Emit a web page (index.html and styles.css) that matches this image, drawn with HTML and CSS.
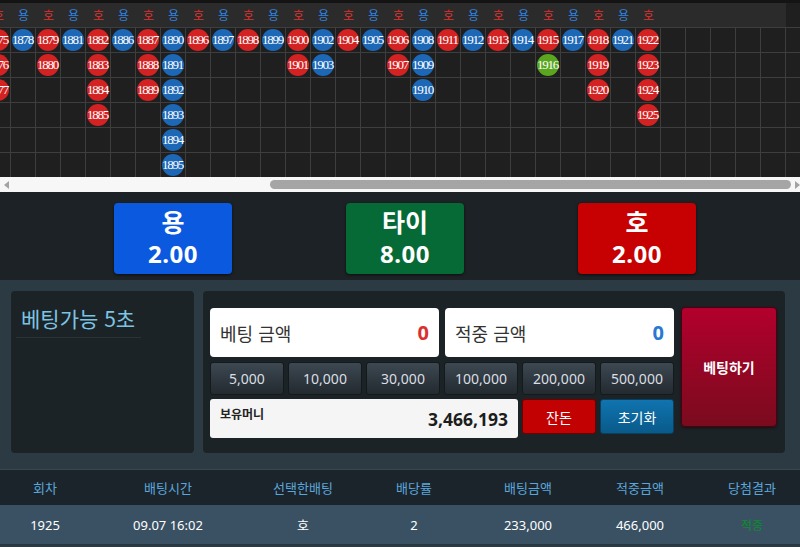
FILE: index.html
```html
<!DOCTYPE html>
<html lang="ko">
<head>
<meta charset="utf-8">
<title>Dragon Tiger</title>
<link rel="stylesheet" href="styles.css">
</head>
<body>
<div class="road">
  <div class="track">
    <div class="col"><span class="h r">호</span><div class="b"><span class="d r">1875</span><span class="d r">1876</span><span class="d r">1877</span></div></div>
    <div class="col"><span class="h u">용</span><div class="b"><span class="d u">1878</span></div></div>
    <div class="col"><span class="h r">호</span><div class="b"><span class="d r">1879</span><span class="d r">1880</span></div></div>
    <div class="col"><span class="h u">용</span><div class="b"><span class="d u">1881</span></div></div>
    <div class="col"><span class="h r">호</span><div class="b"><span class="d r">1882</span><span class="d r">1883</span><span class="d r">1884</span><span class="d r">1885</span></div></div>
    <div class="col"><span class="h u">용</span><div class="b"><span class="d u">1886</span></div></div>
    <div class="col"><span class="h r">호</span><div class="b"><span class="d r">1887</span><span class="d r">1888</span><span class="d r">1889</span></div></div>
    <div class="col"><span class="h u">용</span><div class="b"><span class="d u">1890</span><span class="d u">1891</span><span class="d u">1892</span><span class="d u">1893</span><span class="d u">1894</span><span class="d u">1895</span></div></div>
    <div class="col"><span class="h r">호</span><div class="b"><span class="d r">1896</span></div></div>
    <div class="col"><span class="h u">용</span><div class="b"><span class="d u">1897</span></div></div>
    <div class="col"><span class="h r">호</span><div class="b"><span class="d r">1898</span></div></div>
    <div class="col"><span class="h u">용</span><div class="b"><span class="d u">1899</span></div></div>
    <div class="col"><span class="h r">호</span><div class="b"><span class="d r">1900</span><span class="d r">1901</span></div></div>
    <div class="col"><span class="h u">용</span><div class="b"><span class="d u">1902</span><span class="d u">1903</span></div></div>
    <div class="col"><span class="h r">호</span><div class="b"><span class="d r">1904</span></div></div>
    <div class="col"><span class="h u">용</span><div class="b"><span class="d u">1905</span></div></div>
    <div class="col"><span class="h r">호</span><div class="b"><span class="d r">1906</span><span class="d r">1907</span></div></div>
    <div class="col"><span class="h u">용</span><div class="b"><span class="d u">1908</span><span class="d u">1909</span><span class="d u">1910</span></div></div>
    <div class="col"><span class="h r">호</span><div class="b"><span class="d r">1911</span></div></div>
    <div class="col"><span class="h u">용</span><div class="b"><span class="d u">1912</span></div></div>
    <div class="col"><span class="h r">호</span><div class="b"><span class="d r">1913</span></div></div>
    <div class="col"><span class="h u">용</span><div class="b"><span class="d u">1914</span></div></div>
    <div class="col"><span class="h r">호</span><div class="b"><span class="d r">1915</span><span class="d g">1916</span></div></div>
    <div class="col"><span class="h u">용</span><div class="b"><span class="d u">1917</span></div></div>
    <div class="col"><span class="h r">호</span><div class="b"><span class="d r">1918</span><span class="d r">1919</span><span class="d r">1920</span></div></div>
    <div class="col"><span class="h u">용</span><div class="b"><span class="d u">1921</span></div></div>
    <div class="col"><span class="h r">호</span><div class="b"><span class="d r">1922</span><span class="d r">1923</span><span class="d r">1924</span><span class="d r">1925</span></div></div>
    <div class="col"><span class="h"></span><div class="b"></div></div>
    <div class="col"><span class="h"></span><div class="b"></div></div>
    <div class="col"><span class="h"></span><div class="b"></div></div>
    <div class="col"><span class="h"></span><div class="b"></div></div>
    <div class="col"><span class="h"></span><div class="b"></div></div>
    <div class="col"><span class="h end"></span><div class="b"></div></div>
  </div>
</div>
<div class="scroll">
  <span class="arr-l"></span>
  <span class="thumb"></span>
  <span class="arr-r"></span>
</div>

<div class="picks">
  <div class="pick dragon"><span class="n">용</span><span class="o">2.00</span></div>
  <div class="pick tie"><span class="n">타이</span><span class="o">8.00</span></div>
  <div class="pick tiger"><span class="n">호</span><span class="o">2.00</span></div>
</div>

<div class="lower">
  <div class="status">
    <div class="status-title">베팅가능 5초</div>
  </div>
  <div class="board">
    <div class="form">
      <div class="amounts">
        <div class="amt"><span class="amt-label">베팅 금액</span><span class="amt-val red">0</span></div>
        <div class="amt"><span class="amt-label">적중 금액</span><span class="amt-val blue">0</span></div>
      </div>
      <div class="chips">
        <button class="chip">5,000</button>
        <button class="chip">10,000</button>
        <button class="chip">30,000</button>
        <button class="chip">100,000</button>
        <button class="chip">200,000</button>
        <button class="chip">500,000</button>
      </div>
      <div class="money-row">
        <div class="money"><span class="money-label">보유머니</span><span class="money-val">3,466,193</span></div>
        <button class="act change">잔돈</button>
        <button class="act reset">초기화</button>
      </div>
    </div>
    <button class="bet">베팅하기</button>
  </div>
</div>

<div class="tbl">
  <div class="trow thead">
    <span>회차</span><span>배팅시간</span><span>선택한배팅</span><span>배당률</span><span>배팅금액</span><span>적중금액</span><span class="last">당첨결과</span>
  </div>
  <div class="trow tdata">
    <span>1925</span><span>09.07 16:02</span><span>호</span><span>2</span><span>233,000</span><span>466,000</span><span class="last win">적중</span>
  </div>
</div>
</body>
</html>
```

FILE: styles.css
```css
html, body {
  margin: 0;
  padding: 0;
}
body {
  width: 800px;
  height: 547px;
  overflow: hidden;
  background: #2c3a44;
  font-family: "Noto Sans", "Noto Sans CJK KR", sans-serif;
}

/* road grid */
.road {
  box-sizing: border-box;
  height: 177px;
  background: #1f1f1f;
  border-top: 3px solid #141414;
  overflow: hidden;
}
.track {
  display: flex;
  margin-left: -14px;
  height: 174px;
}
.col {
  flex: none;
  width: 25px;
  display: flex;
  flex-direction: column;
}
.h {
  display: block;
  height: 24px;
  line-height: 24px;
  background: #2b2b2b;
  text-align: center;
  font-family: "Noto Sans CJK KR", sans-serif;
  font-size: 12px;
}
.h.end {
  background: #1f1f1f;
}
.h.r { color: #e2322e; }
.h.u { color: #2f84e4; }
.b {
  flex: 1;
  box-sizing: border-box;
  border-right: 1px solid #3e3e3e;
  background: repeating-linear-gradient(to bottom, #3e3e3e 0 1px, transparent 1px 25px);
  display: flex;
  flex-direction: column;
  align-items: center;
}
.d {
  display: block;
  flex: none;
  width: 22px;
  height: 22px;
  margin: 2px 0 1px;
  border-radius: 50%;
  color: #fff;
  font-family: "Liberation Serif", "DejaVu Serif", serif;
  font-size: 13px;
  letter-spacing: -1.2px;
  line-height: 22px;
  text-align: center;
  white-space: nowrap;
  text-indent: -1px;
}
.d.r { background: #d42121; }
.d.u { background: #1d68b6; }
.d.g { background: #5ba61f; }

/* horizontal scrollbar */
.scroll {
  height: 15px;
  background: #f7f7f7;
  display: flex;
  align-items: center;
}
.arr-l {
  margin-left: 4px;
  width: 0;
  height: 0;
  border-top: 4px solid transparent;
  border-bottom: 4px solid transparent;
  border-right: 5px solid #a3a3a3;
}
.thumb {
  margin-left: 261px;
  width: 522px;
  height: 9px;
  border-radius: 5px;
  background: #a5a5a5;
}
.arr-r {
  margin-left: 4px;
  width: 0;
  height: 0;
  border-top: 4px solid transparent;
  border-bottom: 4px solid transparent;
  border-left: 5px solid #a3a3a3;
}

/* pick buttons */
.picks {
  box-sizing: border-box;
  height: 88px;
  background: #1d2226;
  display: flex;
  gap: 114px;
  padding: 11px 0 0 114px;
}
.pick {
  width: 118px;
  height: 71px;
  border-radius: 4px;
  box-sizing: border-box;
  padding-top: 2px;
  display: flex;
  flex-direction: column;
  align-items: center;
  color: #fff;
  font-weight: 700;
  box-shadow: 0 1px 3px rgba(0, 0, 0, 0.6);
}
.pick .n {
  font-family: "Noto Sans CJK KR", sans-serif;
  font-size: 25px;
  line-height: 32px;
}
.pick .o {
  font-size: 24px;
  line-height: 33px;
  letter-spacing: 0.5px;
}
.dragon { background: #0b59df; }
.tie { background: #066a37; }
.tiger { background: #c70101; }

/* lower */
.lower {
  box-sizing: border-box;
  height: 189px;
  display: flex;
  gap: 9px;
  padding: 11px 15px 16px 11px;
  background: #2c3a44;
}
.status {
  width: 183px;
  flex: none;
  box-sizing: border-box;
  background: #1c2327;
  border-radius: 4px;
  padding: 13px 0 0 5px;
}
.status-title {
  width: 120px;
  height: 28px;
  line-height: 28px;
  padding: 0 0 5px 5px;
  box-sizing: content-box;
  border-bottom: 1px solid #2b3338;
  color: #7dc4e4;
  font-family: "Noto Sans CJK KR", sans-serif;
  font-size: 21px;
  white-space: nowrap;
}
.board {
  flex: 1;
  box-sizing: border-box;
  background: #1c2327;
  border-radius: 4px;
  padding: 17px 8px 0 7px;
  display: flex;
  gap: 7px;
  align-items: flex-start;
}
.form {
  width: 464px;
  flex: none;
  display: flex;
  flex-direction: column;
}
.amounts {
  display: flex;
  gap: 6px;
}
.amt {
  flex: 1;
  height: 49px;
  background: #fff;
  border-radius: 4px;
  display: flex;
  justify-content: space-between;
  align-items: center;
  padding: 0 10px;
}
.amt-label {
  font-family: "Noto Sans CJK KR", sans-serif;
  font-size: 18px;
  color: #333;
}
.amt-val {
  font-size: 20px;
  font-weight: 700;
}
.amt-val.red { color: #d93030; }
.amt-val.blue { color: #2a78d2; }
.chips {
  display: flex;
  gap: 4px;
  margin-top: 5px;
}
button {
  font-family: "Noto Sans", "Noto Sans CJK KR", sans-serif;
  cursor: pointer;
  padding: 0;
}
.chip {
  width: 74px;
  height: 33px;
  border: 1px solid #14191c;
  border-radius: 3px;
  background: linear-gradient(to bottom, #3d4851, #232a30);
  color: #d9dee2;
  font-size: 14px;
}
.money-row {
  display: flex;
  gap: 4px;
  margin-top: 4px;
  align-items: flex-start;
}
.money {
  width: 308px;
  height: 39px;
  box-sizing: border-box;
  background: #f5f5f5;
  border-radius: 3px;
  display: flex;
  justify-content: space-between;
  padding: 0 10px;
}
.money-label {
  align-self: flex-start;
  padding-top: 6px;
  line-height: 18px;
  font-family: "Noto Sans CJK KR", sans-serif;
  font-size: 12px;
  font-weight: 700;
  color: #222;
}
.money-val {
  align-self: center;
  font-size: 17.5px;
  font-weight: 700;
  color: #1d1d1d;
  padding-top: 1px;
}
.act {
  width: 74px;
  height: 35px;
  border-radius: 3px;
  color: #fff;
  font-family: "Noto Sans CJK KR", sans-serif;
  font-size: 14px;
}
.change {
  background: #c20202;
  border: 1px solid #6e0000;
}
.reset {
  background: linear-gradient(to bottom, #1074b0, #095a8a);
  border: 1px solid #0a3f60;
}
.bet {
  width: 96px;
  height: 120px;
  margin-top: -1px;
  border: 1px solid #4e0010;
  border-radius: 4px;
  background: linear-gradient(to bottom, #b2002c, #7a0b1e);
  color: #fff;
  font-family: "Noto Sans CJK KR", sans-serif;
  font-size: 14px;
  font-weight: 700;
  box-shadow: 0 1px 3px rgba(0, 0, 0, 0.5);
}

/* table */
.tbl {
  border-top: 1px solid #3a4751;
}
.trow {
  display: grid;
  grid-template-columns: 90px 156px 114px 108px 120px 104px 1fr;
  align-items: center;
  text-align: center;
  font-family: "Noto Sans", "Noto Sans CJK KR", sans-serif;
  font-size: 13px;
}
.trow .last {
  padding-left: 12px;
}
.thead {
  height: 35px;
  background: #1b242a;
  color: #5ba7dd;
}
.tdata {
  height: 39px;
  background: #3a5164;
  border-bottom: 1px solid #27363f;
  color: #fff;
}
.win {
  color: #0b8d2b;
  font-size: 12px;
}
```
